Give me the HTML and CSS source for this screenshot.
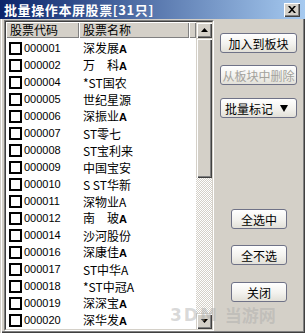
FILE: index.html
```html
<!DOCTYPE html>
<html>
<head>
<meta charset="utf-8">
<link rel="stylesheet" href="styles.css">
</head>
<body>
<div class="window">
  <div class="titlebar">
    <span class="title">批量操作本屏股票[31只]</span>
    <span class="close"><svg width="8" height="7" viewBox="0 0 8 7"><path d="M0 0h2l2 2.2L6 0h2L5 3.5 8 7H6L4 4.8 2 7H0l3-3.5z" fill="#000"/></svg></span>
  </div>
  <div class="main">
    <div class="listbox">
      <div class="listinner">
        <div class="table">
          <div class="header">
            <div class="hcell c1">股票代码</div>
            <div class="hcell c2">股票名称</div>
            <div class="hcell c3"></div>
          </div>
          <div class="rows">
            <div class="row"><div class="left"><span class="cb"></span><span class="code">000001</span></div><div class="name">深发展<b>A</b></div></div>
            <div class="row"><div class="left"><span class="cb"></span><span class="code">000002</span></div><div class="name">万　科<b>A</b></div></div>
            <div class="row"><div class="left"><span class="cb"></span><span class="code">000004</span></div><div class="name">*ST国农</div></div>
            <div class="row"><div class="left"><span class="cb"></span><span class="code">000005</span></div><div class="name">世纪星源</div></div>
            <div class="row"><div class="left"><span class="cb"></span><span class="code">000006</span></div><div class="name">深振业<b>A</b></div></div>
            <div class="row"><div class="left"><span class="cb"></span><span class="code">000007</span></div><div class="name">ST零七</div></div>
            <div class="row"><div class="left"><span class="cb"></span><span class="code">000008</span></div><div class="name">ST宝利来</div></div>
            <div class="row"><div class="left"><span class="cb"></span><span class="code">000009</span></div><div class="name">中国宝安</div></div>
            <div class="row"><div class="left"><span class="cb"></span><span class="code">000010</span></div><div class="name">S ST华新</div></div>
            <div class="row"><div class="left"><span class="cb"></span><span class="code">000011</span></div><div class="name">深物业A</div></div>
            <div class="row"><div class="left"><span class="cb"></span><span class="code">000012</span></div><div class="name">南　玻<b>A</b></div></div>
            <div class="row"><div class="left"><span class="cb"></span><span class="code">000014</span></div><div class="name">沙河股份</div></div>
            <div class="row"><div class="left"><span class="cb"></span><span class="code">000016</span></div><div class="name">深康佳<b>A</b></div></div>
            <div class="row"><div class="left"><span class="cb"></span><span class="code">000017</span></div><div class="name">ST中华A</div></div>
            <div class="row"><div class="left"><span class="cb"></span><span class="code">000018</span></div><div class="name">*ST中冠A</div></div>
            <div class="row"><div class="left"><span class="cb"></span><span class="code">000019</span></div><div class="name">深深宝<b>A</b></div></div>
            <div class="row"><div class="left"><span class="cb"></span><span class="code">000020</span></div><div class="name">深华发<b>A</b></div></div>
          </div>
        </div>
        <div class="scrollbar">
          <div class="sbtn"><svg width="7" height="4" viewBox="0 0 7 4"><path d="M3.5 0L7 4H0z" fill="#000"/></svg></div>
          <div class="thumb"></div>
          <div class="track"></div>
          <div class="sbtn"><svg width="7" height="4" viewBox="0 0 7 4"><path d="M0 0h7L3.5 4z" fill="#000"/></svg></div>
        </div>
      </div>
    </div>
    <div class="panel">
      <div class="btn wide b1">加入到板块</div>
      <div class="btn wide disabled b2">从板块中删除</div>
      <div class="btn wide menu b3"><span>批量标记</span><svg width="8" height="7" viewBox="0 0 8 7"><path d="M0 0h8L4 7z" fill="#000"/></svg></div>
      <div class="btn small b4">全选中</div>
      <div class="btn small b5">全不选</div>
      <div class="btn small b6">关闭</div>
    </div>
  </div>
  <div class="watermark"><span class="wm-logo">3DM</span><span class="wm-text">当游网</span></div>
</div>
</body>
</html>
```
FILE: styles.css
```css
* { box-sizing: border-box; }
body {
  margin: 0;
  font-family: "Noto Sans CJK SC", "Liberation Sans", sans-serif;
}
.window {
  position: relative;
  width: 305px;
  height: 333px;
  background: #d4d0c8;
  overflow: hidden;
  box-shadow: inset 1px 0 #d4d0c8, inset 2px 0 #fff, inset -1px -1px #404040, inset -2px -2px #808080;
}
.titlebar {
  height: 19px;
  display: flex;
  align-items: center;
  justify-content: space-between;
  padding: 0 5px 0 4px;
  background: linear-gradient(to right, #0a246a, #a6caf0);
}
.title {
  color: #fff;
  font-weight: bold;
  font-size: 13px;
  line-height: 19px;
  letter-spacing: 0.6px;
}
.close {
  width: 16px;
  height: 14px;
  display: flex;
  align-items: center;
  justify-content: center;
  background: #d4d0c8;
  box-shadow: inset 1px 1px #fff, inset -1px -1px #404040, inset -2px -2px #808080;
}
.main {
  display: flex;
  padding: 1px 0 0 4px;
}
.listbox {
  width: 210px;
  height: 311px;
  border: 1px solid;
  border-color: #808080 #fff #fff #808080;
}
.listinner {
  height: 100%;
  display: flex;
  background: #fff;
  border: 1px solid;
  border-color: #404040 #d4d0c8 #d4d0c8 #404040;
}
.table {
  flex: 1;
  overflow: hidden;
}
.header {
  display: flex;
  height: 16px;
}
.hcell {
  height: 16px;
  background: #d4d0c8;
  font-size: 12px;
  line-height: 16px;
  padding-left: 4px;
  color: #000;
  box-shadow: inset 1px 1px #fff, inset -1px -1px #808080;
}
.c1 { width: 73px; }
.c2 { width: 110px; }
.c3 { flex: 1; }
.rows { padding-top: 2px; }
.row {
  display: flex;
  height: 17px;
  align-items: center;
}
.left {
  width: 73px;
  display: flex;
  align-items: center;
}
.cb {
  width: 13px;
  height: 13px;
  margin-left: 3px;
  border: 2px solid #000;
  background: #fff;
  flex: none;
}
.code {
  margin-left: 2px;
  font-family: "Liberation Sans", sans-serif;
  font-size: 11px;
  line-height: 17px;
  color: #000;
}
.name {
  padding-left: 4px;
  font-size: 12px;
  line-height: 17px;
  color: #000;
  white-space: pre;
}
.name b { font-weight: 900; font-family: "Liberation Sans", sans-serif; font-size: 11px; }
.scrollbar {
  width: 16px;
  display: flex;
  flex-direction: column;
}
.sbtn, .thumb {
  background: #d4d0c8;
  box-shadow: inset 1px 1px #d4d0c8, inset 2px 2px #fff, inset -1px -1px #404040, inset -2px -2px #808080;
}
.sbtn {
  height: 16px;
  display: flex;
  align-items: center;
  justify-content: center;
}
.thumb { height: 140px; }
.track {
  flex: 1;
  background: repeating-conic-gradient(#d4d0c8 0 25%, #fff 0 50%) 0 0 / 2px 2px;
}
.panel {
  flex: 1;
  display: flex;
  flex-direction: column;
  align-items: flex-start;
  padding-left: 6px;
}
.btn {
  height: 20px;
  display: flex;
  align-items: center;
  justify-content: center;
  font-size: 12px;
  color: #000;
  border: 1px solid #6f7287;
  border-radius: 3px;
  background: linear-gradient(#ffffff, #f3f2ee 55%, #e2e0d8);
  white-space: nowrap;
}
.wide { width: 77px; }
.small { width: 56px; margin-left: 11px; }
.disabled { color: #a3a29c; }
.menu { justify-content: space-between; padding: 0 8px 0 4px; }
.b1 { margin-top: 13px; }
.b2 { margin-top: 12px; }
.b3 { margin-top: 13px; }
.b4 { margin-top: 91px; }
.b5 { margin-top: 16px; }
.b6 { margin-top: 17px; }
.watermark {
  position: absolute;
  left: 170px;
  top: 307px;
  display: flex;
  align-items: center;
  gap: 6px;
  color: rgba(170, 170, 170, 0.45);
  pointer-events: none;
  line-height: 16px;
}
.wm-logo {
  font-family: "DejaVu Sans", sans-serif;
  font-weight: bold;
  font-size: 17px;
  letter-spacing: 2px;
}
.wm-text {
  font-size: 17px;
  font-weight: bold;
}
```
